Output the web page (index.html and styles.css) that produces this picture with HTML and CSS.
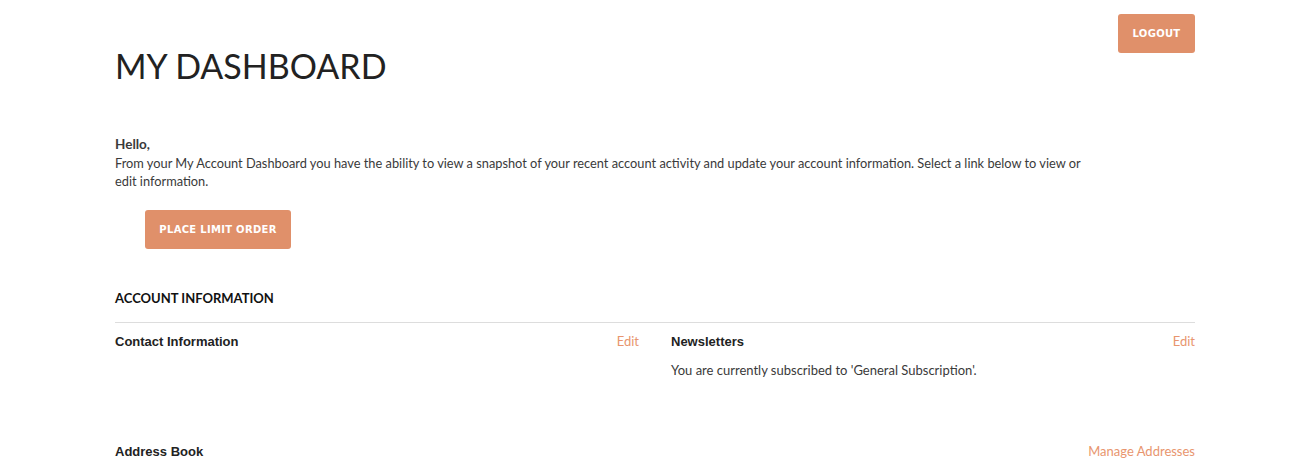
FILE: index.html
```html
<!DOCTYPE html>
<html>
<head>
<meta charset="utf-8">
<link rel="stylesheet" href="styles.css">
</head>
<body>
<div class="page">
  <header class="top">
    <h1 class="title">MY DASHBOARD</h1>
    <a class="btn btn-logout" href="#">LOGOUT</a>
  </header>
  <section class="welcome">
    <p class="hello">Hello,</p>
    <p class="intro">From your My Account Dashboard you have the ability to view a snapshot of your recent account activity and update your account information. Select a link below to view or edit information.</p>
  </section>
  <div class="actions">
    <a class="btn btn-order" href="#">PLACE LIMIT ORDER</a>
  </div>
  <section class="account">
    <h2 class="section-title">ACCOUNT INFORMATION</h2>
    <div class="cols">
      <div class="box">
        <div class="box-head">
          <h3 class="box-title">Contact Information</h3>
          <a class="link" href="#">Edit</a>
        </div>
      </div>
      <div class="box">
        <div class="box-head">
          <h3 class="box-title">Newsletters</h3>
          <a class="link" href="#">Edit</a>
        </div>
        <p class="box-text">You are currently subscribed to 'General Subscription'.</p>
      </div>
    </div>
    <div class="address">
      <h3 class="box-title">Address Book</h3>
      <a class="link" href="#">Manage Addresses</a>
    </div>
  </section>
</div>
</body>
</html>
```

FILE: styles.css
```css
* { box-sizing: border-box; }
html, body { margin: 0; padding: 0; background: #fff; }
body {
  font-family: Lato, "Open Sans", sans-serif;
  color: #3a3a3a;
  font-size: 13px;
}
.page {
  width: 1080px;
  margin-left: 115px;
}
.top {
  display: flex;
  justify-content: space-between;
  align-items: flex-start;
  padding-top: 14px;
}
.title {
  margin: 32px 0 0 0;
  font-family: Lato, sans-serif;
  font-weight: 400;
  font-size: 34px;
  line-height: 40px;
  color: #222;
}
.btn {
  display: inline-flex;
  align-items: center;
  justify-content: center;
  height: 39px;
  background: #e0906a;
  color: #fff;
  font-family: "DejaVu Sans", Verdana, sans-serif;
  font-weight: 700;
  font-size: 10px;
  border-radius: 3px;
  text-decoration: none;
  letter-spacing: 0.3px;
}
.btn-logout { width: 77px; }
.welcome { margin-top: 49px; }
.hello {
  margin: 0;
  font-weight: 700;
  font-size: 13.5px;
  line-height: 18px;
  color: #3a3a3a;
}
.intro {
  margin: 1px 0 0 0;
  font-size: 12.8px;
  line-height: 18px;
  max-width: 985px;
}
.actions {
  margin-top: 20px;
  padding-left: 30px;
}
.btn-order { width: 146px; }
.section-title {
  margin: 40px 0 0 0;
  font-family: Lato, sans-serif;
  font-weight: 700;
  font-size: 13px;
  line-height: 18px;
  color: #111;
  padding-bottom: 15px;
  border-bottom: 1px solid #ddd;
}
.cols {
  display: flex;
  justify-content: space-between;
  margin-top: 9px;
}
.box { width: 524px; }
.box-head {
  display: flex;
  justify-content: space-between;
  align-items: baseline;
}
.box-title {
  margin: 0;
  font-family: "Liberation Sans", Arial, sans-serif;
  font-weight: 700;
  font-size: 13px;
  line-height: 18px;
  color: #222;
}
.link {
  color: #e8956e;
  text-decoration: none;
  font-size: 13px;
  line-height: 18px;
}
.box-text {
  margin: 10px 0 0 0;
  line-height: 18px;
}
.address {
  display: flex;
  justify-content: space-between;
  align-items: baseline;
  margin-top: 63px;
}
```
